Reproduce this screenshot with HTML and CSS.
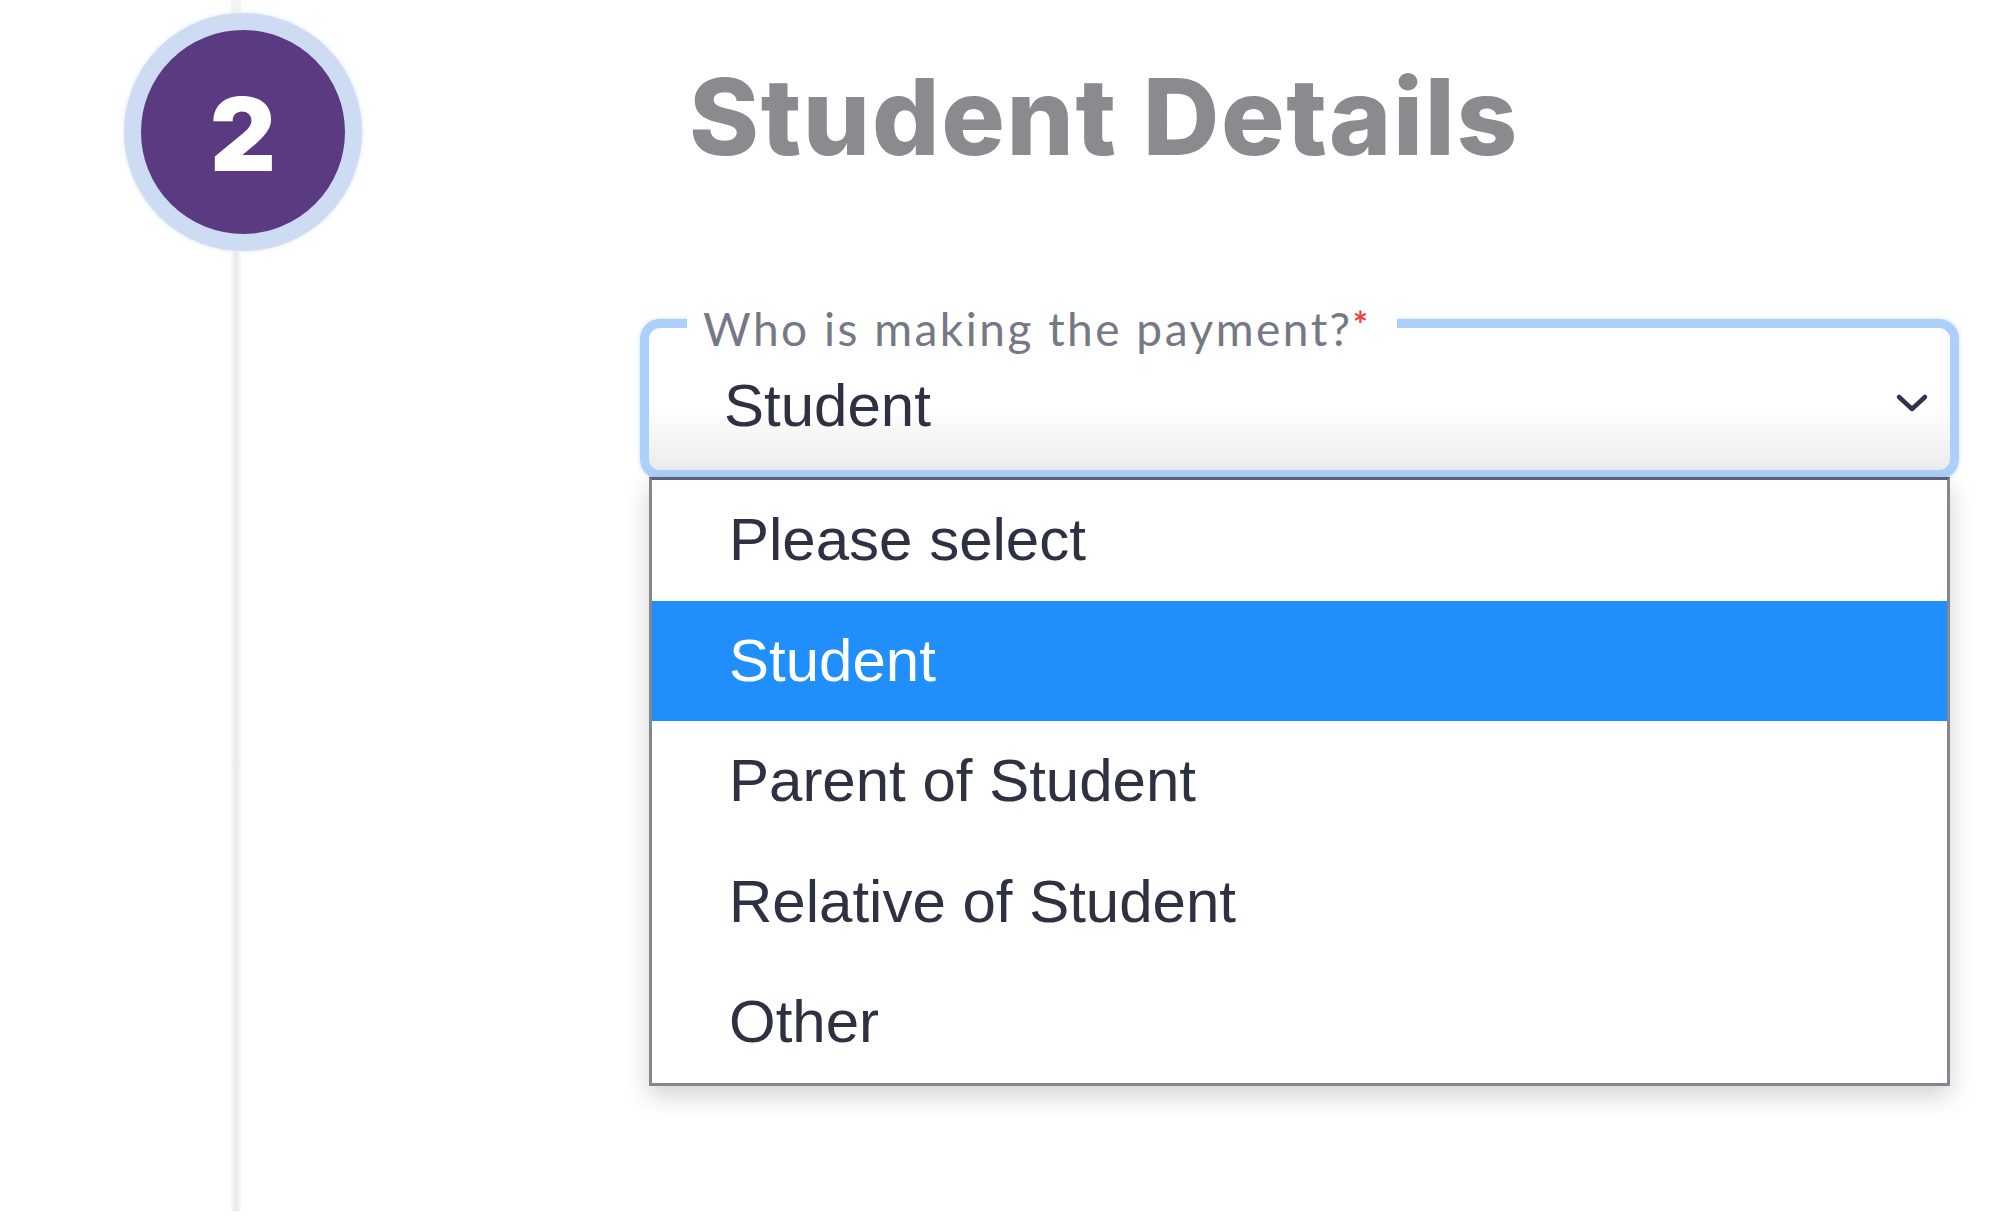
FILE: index.html
```html
<!DOCTYPE html>
<html lang="en">
<head>
  <meta charset="UTF-8">
  <title>Student Details</title>
  <link rel="stylesheet" href="styles.css">
</head>
<body>
  <div class="step">
    <div class="rail">
      <div class="rail-top"></div>
      <div class="badge"><span>2</span></div>
      <div class="rail-line"></div>
    </div>

    <div class="content">
      <h1>Student Details</h1>

      <div class="field">
        <label class="field-label">Who is making the payment?<span class="req">*</span></label>
        <div class="field-value">Student</div>
        <svg class="chevron" width="34" height="22" viewBox="0 0 34 22">
          <path d="M4 5 L17 17 L30 5" fill="none" stroke="#2c3450" stroke-width="4.5" stroke-linecap="round" stroke-linejoin="round"/>
        </svg>

        <ul class="options">
          <li>Please select</li>
          <li class="selected">Student</li>
          <li>Parent of Student</li>
          <li>Relative of Student</li>
          <li>Other</li>
        </ul>
      </div>
    </div>
  </div>
</body>
</html>
```

FILE: styles.css
```css
body {
  margin: 0;
  background: #fff;
  font-family: "Liberation Sans", Arial, sans-serif;
  color: #2d3142;
}
.step {
  display: flex;
  padding-left: 124px;
}

/* step rail */
.rail {
  width: 238px;
  display: flex;
  flex-direction: column;
  align-items: flex-start;
}
.rail-top {
  width: 10px;
  height: 13px;
  margin-left: 107px;
  background: #f3f3f5;
}
.badge {
  width: 204px;
  height: 204px;
  border: 17px solid #cddcf3;
  border-radius: 50%;
  background: #5a3b81;
  box-shadow: 0 0 5px #dbe5f6;
  display: flex;
  align-items: center;
  justify-content: center;
}
.badge span {
  font-family: Inter, sans-serif;
  font-weight: 900;
  font-size: 102px;
  line-height: 1;
  color: #fff;
  margin-top: 4px;
}
.rail-line {
  width: 10px;
  height: 960px;
  margin-left: 107px;
  background: linear-gradient(to right, #f7f7f8, #e9e9eb 50%, #f7f7f8);
}

/* content */
.content {
  margin-left: 278px;
  width: 1319px;
  padding-top: 13px;
}
h1 {
  margin: 51px 0 0 49px;
  font-family: Inter, sans-serif;
  font-weight: 800;
  font-size: 106px;
  line-height: 1;
  letter-spacing: 1.7px;
  color: #8b8a8e;
}

.field {
  position: relative;
  margin-top: 149px;
  height: 142px;
  border: 9px solid #add0fa;
  border-radius: 20px;
  box-shadow: 0 0 4px #c6ddfb;
  background: linear-gradient(#fff 55%, #ececef);
  display: flex;
  align-items: flex-start;
}
.field-label {
  position: absolute;
  top: -22px;
  left: 38px;
  padding: 0 26px 0 16px;
  background: #fff;
  font-family: Lato, sans-serif;
  font-weight: 400;
  font-size: 46px;
  line-height: 1;
  letter-spacing: 2.5px;
  color: #757885;
}
.req {
  color: #f0413f;
  font-size: 36px;
  font-weight: 700;
  vertical-align: top;
  margin-left: 0;
}
.field-value {
  flex: 1;
  padding: 48px 0 0 75px;
  font-size: 60px;
  line-height: 1;
}
.chevron {
  margin: 64px 21px 0 0;
}

/* open dropdown */
.options {
  position: absolute;
  top: calc(100% + 7px);
  left: 0;
  right: 0;
  margin: 0;
  padding: 0;
  list-style: none;
  background: #fff;
  border: 3px solid #85878f;
  border-top-color: #5a6179;
  box-shadow: 0 10px 24px rgba(0, 0, 0, 0.18);
}
.options li {
  height: 120.5px;
  line-height: 120px;
  padding-left: 77px;
  font-size: 60px;
}
.options li.selected {
  background: #208ffb;
  color: #fff;
}
```
